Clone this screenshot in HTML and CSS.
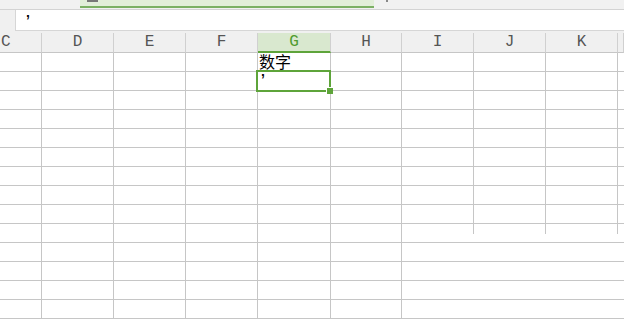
FILE: index.html
```html
<!DOCTYPE html>
<html>
<head>
<meta charset="utf-8">
<link rel="stylesheet" href="styles.css">
</head>
<body>
<div class="topbar">
  <div class="tab"><span class="tab-mark"></span></div>
  <span class="dot"></span>
</div>
<div class="formula">
  <div class="fx-box"><span class="apos">’</span></div>
</div>
<div class="sheet">
  <div class="row head">
    <div class="c c0">C</div><div class="c">D</div><div class="c">E</div><div class="c">F</div><div class="c cg sel-h">G</div><div class="c ch">H</div><div class="c">I</div><div class="c">J</div><div class="c">K</div><div class="c last"></div>
  </div>
  <div class="row">
    <div class="c c0"></div><div class="c"></div><div class="c"></div><div class="c"></div><div class="c cg"><span class="txt">数字</span></div><div class="c ch"></div><div class="c"></div><div class="c"></div><div class="c"></div><div class="c last"></div>
  </div>
  <div class="row">
    <div class="c c0"></div><div class="c"></div><div class="c"></div><div class="c"></div><div class="c cg active"><span class="apos cell-apos">’</span><span class="handle"></span></div><div class="c ch"></div><div class="c"></div><div class="c"></div><div class="c"></div><div class="c last"></div>
  </div>
  <div class="row"><div class="c c0"></div><div class="c"></div><div class="c"></div><div class="c"></div><div class="c cg"></div><div class="c ch"></div><div class="c"></div><div class="c"></div><div class="c"></div><div class="c last"></div></div>
  <div class="row"><div class="c c0"></div><div class="c"></div><div class="c"></div><div class="c"></div><div class="c cg"></div><div class="c ch"></div><div class="c"></div><div class="c"></div><div class="c"></div><div class="c last"></div></div>
  <div class="row"><div class="c c0"></div><div class="c"></div><div class="c"></div><div class="c"></div><div class="c cg"></div><div class="c ch"></div><div class="c"></div><div class="c"></div><div class="c"></div><div class="c last"></div></div>
  <div class="row"><div class="c c0"></div><div class="c"></div><div class="c"></div><div class="c"></div><div class="c cg"></div><div class="c ch"></div><div class="c"></div><div class="c"></div><div class="c"></div><div class="c last"></div></div>
  <div class="row"><div class="c c0"></div><div class="c"></div><div class="c"></div><div class="c"></div><div class="c cg"></div><div class="c ch"></div><div class="c"></div><div class="c"></div><div class="c"></div><div class="c last"></div></div>
  <div class="row"><div class="c c0"></div><div class="c"></div><div class="c"></div><div class="c"></div><div class="c cg"></div><div class="c ch"></div><div class="c"></div><div class="c"></div><div class="c"></div><div class="c last"></div></div>
  <div class="row"><div class="c c0"></div><div class="c"></div><div class="c"></div><div class="c"></div><div class="c cg"></div><div class="c ch"></div><div class="c"></div><div class="c"></div><div class="c"></div><div class="c last"></div></div>
  <div class="row"><div class="c c0"></div><div class="c"></div><div class="c"></div><div class="c"></div><div class="c cg"></div><div class="c ch"></div><div class="c half"></div><div class="c half"></div><div class="c half"></div><div class="c last"></div></div>
  <div class="row"><div class="c c0"></div><div class="c"></div><div class="c"></div><div class="c"></div><div class="c cg"></div><div class="c ch"></div><div class="c nb"></div><div class="c nb"></div><div class="c nb"></div><div class="c last"></div></div>
  <div class="row"><div class="c c0"></div><div class="c"></div><div class="c"></div><div class="c"></div><div class="c cg"></div><div class="c ch"></div><div class="c nb"></div><div class="c nb"></div><div class="c nb"></div><div class="c last"></div></div>
  <div class="row"><div class="c c0"></div><div class="c"></div><div class="c"></div><div class="c"></div><div class="c cg"></div><div class="c ch"></div><div class="c nb"></div><div class="c nb"></div><div class="c nb"></div><div class="c last"></div></div>
  <div class="row"><div class="c c0"></div><div class="c"></div><div class="c"></div><div class="c"></div><div class="c cg"></div><div class="c ch"></div><div class="c nb"></div><div class="c nb"></div><div class="c nb"></div><div class="c last"></div></div>
</div>
</body>
</html>
```
FILE: styles.css
```css
*, *::before, *::after { box-sizing: border-box; }
html, body {
  margin: 0;
  padding: 0;
  width: 624px;
  height: 319px;
  overflow: hidden;
  background: #ffffff;
  font-family: "Noto Sans CJK SC", "Liberation Sans", sans-serif;
}
.topbar {
  height: 10px;
  background: #f1f1f1;
  border-bottom: 1px solid #d3d3d3;
  display: flex;
  align-items: flex-start;
}
.tab {
  margin-left: 80px;
  width: 294px;
  height: 8px;
  background: #e2eed9;
  border-bottom: 2px solid #7cb064;
  position: relative;
}
.tab-mark {
  position: absolute;
  left: 7px;
  top: 0;
  width: 11px;
  height: 2px;
  background: #777777;
}
.dot {
  margin-left: 12px;
  width: 2px;
  height: 2px;
  background: #888888;
}
.formula {
  height: 23px;
  background: #f0f0f0;
  padding-left: 15px;
}
.fx-box {
  height: 21px;
  background: #ffffff;
  border-left: 1px solid #d6d6d6;
  border-bottom: 1px solid #d6d6d6;
  position: relative;
}
.apos {
  font-family: "Liberation Sans", sans-serif;
  font-weight: 700;
  font-size: 14px;
  line-height: 12px;
  color: #000;
  position: absolute;
}
.fx-box .apos { left: 10px; top: 4px; }
.sheet { overflow: hidden; }
.row {
  display: flex;
  height: 19px;
}
.c {
  flex: none;
  width: 72px;
  height: 19px;
  border-right: 1px solid #c6c6c6;
  border-bottom: 1px solid #c6c6c6;
  position: relative;
}
.c0 { width: 42px; }
.cg { width: 73px; }
.ch { width: 71px; }
.last { flex: 1; border-right: none; }
.nb { border-right: none; }
.half {
  border-right: none;
  background: linear-gradient(#c6c6c6, #c6c6c6) right top / 1px 10px no-repeat;
}
.row.head { height: 20px; }
.head .c {
  height: 20px;
  background: #f0f0f0;
  border-bottom: 1px solid #c6c6c6;
  border-right: 1px solid #d0d0d0;
  font-family: "Liberation Mono", monospace;
  font-size: 16px;
  line-height: 19px;
  color: #555555;
  text-align: center;
}
.head .c0 { text-align: left; padding-left: 1px; }
.head .sel-h {
  background: #d9e8cf;
  color: #4f9b2e;
  border-bottom: 2px solid #5ea43a;
  line-height: 18px;
}
.txt {
  position: absolute;
  left: 1px;
  top: 0;
  font-size: 16px;
  line-height: 17px;
  color: #000;
}
.active { z-index: 2; }
.active::before {
  content: "";
  position: absolute;
  left: -2px;
  top: -2px;
  width: 75px;
  height: 22px;
  border: 2px solid #5ea43a;
}
.cell-apos { left: 3px; top: 1px; }
.handle {
  position: absolute;
  left: 68px;
  top: 15px;
  width: 7px;
  height: 7px;
  background: #5ea43a;
  border-left: 1px solid #ffffff;
  border-top: 1px solid #ffffff;
}
```
